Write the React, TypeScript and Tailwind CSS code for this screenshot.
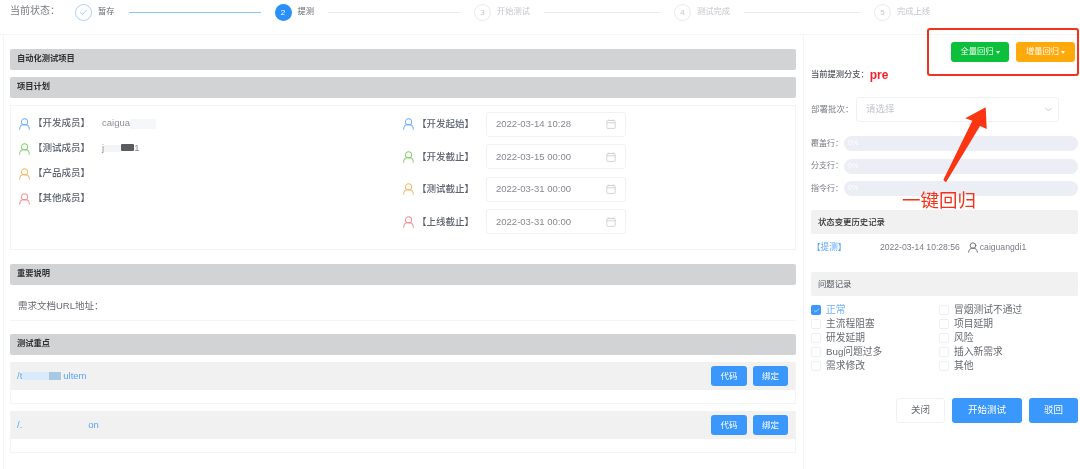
import React from "react";
import { ChevronDown, Check } from "lucide-react";

const UserIcon = ({ c, s = 11 }: { c: string; s?: number }) => (
  <svg width={s} height={s + 1} viewBox="0 0 16 17" fill="none" stroke={c} strokeWidth="1.500" strokeLinecap="round" className="shrink-0">
    <circle cx="8" cy="5.500" r="4.500" />
    <path d="M1 16c0-4 3-6.700 7-6.700s7 2.700 7 6.700" />
  </svg>
);

const CalIcon = () => (
  <svg width="10" height="10" viewBox="0 0 12 12" fill="none" stroke="#c4c6cc" strokeWidth="0.900" className="shrink-0">
    <rect x="1" y="1.800" width="10" height="9.500" rx="1" />
    <path d="M1 4.500h10M3.500 .5v2M8.500 .5v2" />
  </svg>
);

const Bar = ({ children, className = "" }: { children: React.ReactNode; className?: string }) => (
  <div className={`h-[21px] bg-[#d2d3d5] rounded-[2px] pl-[7px] flex items-center text-[8.250px] font-bold text-[#303133] ${className}`}>
    {children}
  </div>
);

const steps = [
  { n: "2", t: "提测", line: 132 },
  { n: "3", t: "开始测试", line: 116 },
  { n: "4", t: "测试完成", line: 116 },
  { n: "5", t: "完成上线", line: 0 },
];

const members = [
  { c: "#6fb1ff", t: "【开发成员】" },
  { c: "#85d16f", t: "【测试成员】" },
  { c: "#f5b96c", t: "【产品成员】" },
  { c: "#f98e8e", t: "【其他成员】" },
];

const dates = [
  { c: "#6fb1ff", t: "【开发起始】", d: "2022-03-14 10:28" },
  { c: "#85d16f", t: "【开发截止】", d: "2022-03-15 00:00" },
  { c: "#f5b96c", t: "【测试截止】", d: "2022-03-31 00:00" },
  { c: "#f98e8e", t: "【上线截止】", d: "2022-03-31 00:00" },
];

const CodeRow = ({ children, className = "" }: { children: React.ReactNode; className?: string }) => (
  <div className={`h-[42px] border-b border-x border-[#f3f4f5] ${className}`}>
    <div className="h-[28px] bg-[#f0f1f0] flex items-center pl-[6px] pr-[7px] text-[9.500px] text-[#5aa5f5]">
      <div className="flex-1 flex items-center">{children}</div>
      <div className="flex gap-[6px]">
        <div className="w-[36px] h-[20px] rounded-[3px] bg-[#3a97fb] text-white text-[8.500px] flex items-center justify-center">代码</div>
        <div className="w-[35px] h-[20px] rounded-[3px] bg-[#3a97fb] text-white text-[8.500px] flex items-center justify-center">绑定</div>
      </div>
    </div>
  </div>
);

const Progress = ({ label }: { label: string }) => (
  <div className="flex items-center h-[15px]">
    <span className="w-[33px] shrink-0 whitespace-nowrap text-[8px] text-[#7a7d84]">{label}</span>
    <div className="flex-1 h-[15px] rounded-full bg-[#ebeef5] pl-[4px] flex items-center text-[7px] text-white">0%</div>
  </div>
);

const Cb = ({ t, on }: { t: string; on?: boolean }) => (
  <div className="h-[14px] flex items-center gap-[5px]">
    <div className={`w-[10px] h-[10px] rounded-[2px] flex items-center justify-center ${on ? "bg-[#3a97fb]" : "border border-[#eff0f2]"}`}>
      {on && <Check size={7} color="white" strokeWidth={2} />}
    </div>
    <span className={`text-[9.750px] ${on ? "text-[#6fb1ff]" : "text-[#666a70]"}`}>{t}</span>
  </div>
);

export default function App() {
  return (
    <div className="relative w-[1080px] h-[469px] overflow-hidden bg-white blur-[0.3px] [font-family:'Liberation_Sans','Noto_Sans_CJK_SC',sans-serif]">
      {/* header */}
      <div className="h-[35px] border-b border-[#f4f5f6] flex items-start pl-[10px] pt-[4px]">
        <span className="w-[65px] text-[10px] leading-[14px] text-[#7a7d84]">当前状态：</span>
        <div className="flex items-center h-[17px]">
          <div className="w-[17px] h-[17px] rounded-full border border-[#a6d0fc] flex items-center justify-center">
            <Check size={9} color="#5aa5f5" strokeWidth={1.500} />
          </div>
          <span className="ml-[6px] text-[8.250px] text-[#666a70]">暂存</span>
          <div className="ml-[14px] w-[132px] h-px bg-[#8cc4fb]" />
          {steps.map((s, i) => (
            <React.Fragment key={s.n}>
              <div
                className={`ml-[14px] w-[17px] h-[17px] rounded-full flex items-center justify-center text-[8px] ${
                  i === 0 ? "bg-[#2b8ffb] text-white" : "border border-[#e8eaee] text-[#c4c6cc]"
                }`}
              >
                {s.n}
              </div>
              <span className={`ml-[6px] text-[8.250px] ${i === 0 ? "text-[#666a70]" : "text-[#c4c6cc]"}`}>{s.t}</span>
              {i < 3 && <div className="ml-[14px] h-px bg-[#e8eaee]" style={{ width: s.line }} />}
            </React.Fragment>
          ))}
        </div>
      </div>

      {/* body */}
      <div className="flex h-[434px]">
        <div className="ml-[3px] w-[801px] shrink-0 border-x border-[#f3f4f5] pl-[6px] pr-[7px] pt-[14px]">
          <Bar>自动化测试项目</Bar>
          <Bar className="mt-[7px]">项目计划</Bar>
          <div className="mt-[7px] h-[145px] border border-[#f3f4f5] flex">
            <div className="w-[384px] pl-[8px] pt-[5px]">
              {members.map((m, i) => (
                <div key={m.t} className="h-[25px] flex items-center">
                  <UserIcon c={m.c} />
                  <span className="ml-[3px] w-[69px] text-[9.500px] font-medium text-[#5c6470]">{m.t}</span>
                  {i === 0 && (
                    <span className="flex items-center text-[9.500px] text-[#8b8e94]">
                      caigua
                      <span className="w-[26px] h-[10px] bg-[#f6f7f9]" />
                    </span>
                  )}
                  {i === 1 && (
                    <span className="flex items-center text-[9.500px] text-[#8b8e94]">
                      j
                      <span className="w-[17px] h-[7px] bg-[#f3f4f5]" />
                      <span className="w-[13px] h-[7px] rounded-[1px] bg-[#5a5c60] -mt-[3px]" />
                      1
                    </span>
                  )}
                </div>
              ))}
            </div>
            <div className="pl-[8px] pt-[2px]">
              {dates.map((m) => (
                <div key={m.d + m.t} className="h-[32.500px] flex items-center">
                  <UserIcon c={m.c} />
                  <span className="ml-[3px] w-[69px] text-[9.500px] font-medium text-[#5c6470]">{m.t}</span>
                  <div className="w-[140px] h-[25px] border border-[#f0f1f3] rounded-[3px] pl-[9px] pr-[9px] flex items-center justify-between text-[9.500px] text-[#85888e]">
                    {m.d}
                    <CalIcon />
                  </div>
                </div>
              ))}
            </div>
          </div>
          <Bar className="mt-[14px]">重要说明</Bar>
          <div className="h-[36px] border-b border-[#f3f4f5] pl-[8px] pt-[8px] flex items-center text-[9.500px] text-[#666a70]">需求文档URL地址：</div>
          <Bar className="mt-[13px]">测试重点</Bar>
          <CodeRow className="mt-[7px]">
            /t
            <span className="w-[27px] h-[8px] bg-[#d8eafc]" />
            <span className="w-[12px] h-[8px] bg-[#a9c8e4]" />
            <span className="w-[2px]" />
            ultem
          </CodeRow>
          <CodeRow className="mt-[7px]">
            /.
            <span className="w-[66px]" />
            on
          </CodeRow>
        </div>

        {/* right */}
        <div className="flex-1 min-w-0 pl-[7px] pr-[2px]">
          <div className="h-[20px] mt-[7px] pr-[3px] flex justify-end gap-[7px]">
            <div className="w-[58px] h-[20px] rounded-[3px] bg-[#0dc03c] text-white text-[8.250px] flex items-center justify-center gap-[2px]">
              全量回归
              <span className="border-x-[2px] border-x-transparent border-t-[3px] border-t-white" />
            </div>
            <div className="w-[59px] h-[20px] rounded-[3px] bg-[#ffa90a] text-white text-[8.250px] flex items-center justify-center gap-[2px]">
              增量回归
              <span className="border-x-[2px] border-x-transparent border-t-[3px] border-t-white" />
            </div>
          </div>
          <div className="mt-[6px] h-[14px] flex items-center text-[8.250px] font-medium text-[#50545c]">
            当前提测分支：
            <span className="ml-[1px] text-[12px] font-bold text-[#f5222d]">pre</span>
          </div>
          <div className="mt-[15px] flex items-center">
            <span className="w-[45px] text-[8.500px] text-[#7a7d84] whitespace-nowrap">部署批次：</span>
            <div className="w-[203px] h-[25px] border border-[#f0f1f3] rounded-[3px] pl-[9px] pr-[4px] flex items-center justify-between text-[9.500px] text-[#c4c6cc]">
              请选择
              <ChevronDown size={11} color="#c4c6cc" />
            </div>
          </div>
          <div className="mt-[14px] flex flex-col gap-[7.500px]">
            <Progress label="覆盖行：" />
            <Progress label="分支行：" />
            <Progress label="指令行：" />
          </div>
          <div className="mt-[14px] h-[24px] bg-[#f0f1f0] rounded-[2px] pl-[7px] flex items-center text-[8.400px] font-medium text-[#303133]">状态变更历史记录</div>
          <div className="mt-[6px] h-[14px] flex items-center text-[8.600px] text-[#7a7d84]">
            <span className="w-[69px] pl-[1px] text-[#5aa5f5]">【提测】</span>
            <span>2022-03-14 10:28:56</span>
            <span className="ml-[8px]"><UserIcon c="#6a6d73" s={10} /></span>
            <span className="ml-[2px]">caiguangdi1</span>
          </div>
          <div className="mt-[18px] h-[24px] bg-[#f0f1f0] rounded-[2px] pl-[7px] flex items-center text-[8.400px] text-[#50545c]">问题记录</div>
          <div className="mt-[7px] grid grid-cols-[128px_1fr]">
            <Cb t="正常" on />
            <Cb t="冒烟测试不通过" />
            <Cb t="主流程阻塞" />
            <Cb t="项目延期" />
            <Cb t="研发延期" />
            <Cb t="风险" />
            <Cb t="Bug问题过多" />
            <Cb t="插入新需求" />
            <Cb t="需求修改" />
            <Cb t="其他" />
          </div>
          <div className="mt-[25px] flex justify-end gap-[7px] text-[9.500px]">
            <div className="w-[49px] h-[25px] border border-[#f0f1f3] rounded-[3px] text-[#666a70] flex items-center justify-center">关闭</div>
            <div className="w-[70px] h-[25px] rounded-[3px] bg-[#3a97fb] text-white flex items-center justify-center">开始测试</div>
            <div className="w-[49px] h-[25px] rounded-[3px] bg-[#3a97fb] text-white flex items-center justify-center">驳回</div>
          </div>
        </div>
      </div>

      {/* annotation overlay */}
      <div className="absolute left-[927px] top-[28px] w-[152px] h-[48px] border-2 border-[#f5301c] rounded-[3px]" />
      <svg className="absolute left-0 top-0 pointer-events-none" width="1080" height="469">
        <polygon points="985.700,107.300 965.300,118.300 972.300,120.700 943.300,180 946,182.300 980,126 986.700,129" fill="#fb3412" />
      </svg>
      <div className="absolute left-[902px] top-[187px] text-[18.500px] leading-[24px] text-[#f4321a] [font-family:'Noto_Sans_CJK_SC',sans-serif]">一键回归</div>
    </div>
  );
}
